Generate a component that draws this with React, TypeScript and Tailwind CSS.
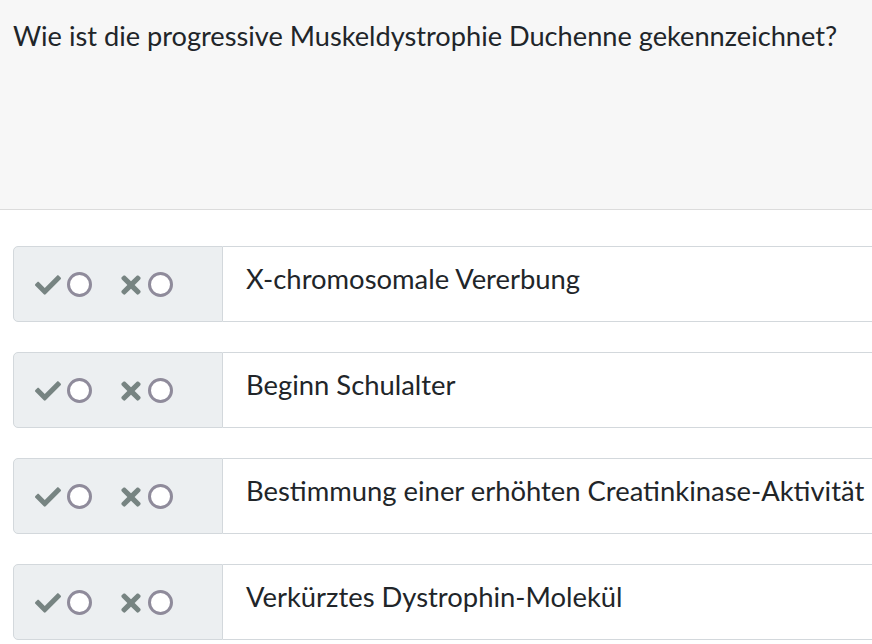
import { FaCheck, FaTimes } from 'react-icons/fa';

const answers = [
  'X-chromosomale Vererbung',
  'Beginn Schulalter',
  'Bestimmung einer erhöhten Creatinkinase-Aktivität',
  'Verkürztes Dystrophin-Molekül',
];

function Radio() {
  return <span className="inline-block w-[25px] h-[25px] rounded-full border-[3px] border-[#8f8b9b] bg-white" />;
}

function AnswerRow({ text }: { text: string }) {
  return (
    <div className="flex h-[76px] mr-[-40px]">
      <div className="flex items-center w-[210px] shrink-0 bg-[#eceff1] border border-[#d3d8dc] rounded-l-[5px] pl-[21px] pt-[1px]">
        <div className="flex items-center gap-[6px]">
          <FaCheck className="text-[#778482]" size={26} />
          <Radio />
        </div>
        <div className="flex items-center gap-[3px] ml-[25px]">
          <FaTimes className="text-[#778482]" size={28} />
          <Radio />
        </div>
      </div>
      <div className="flex-1 flex items-center bg-white border-y border-[#d3d8dc] pl-[23px] pb-[10px] whitespace-nowrap text-[27.4px] text-[#212529]">
        {text}
      </div>
    </div>
  );
}

export default function App() {
  return (
    <div className="w-[872px] h-[644px] overflow-hidden bg-white" style={{ fontFamily: 'Lato, "Noto Sans", sans-serif' }}>
      <div className="h-[210px] bg-[#f7f7f7] border-b border-[#dcdcdc] px-[13px] pt-[16px]">
        <h1 className="text-[27.2px] leading-[40px] text-[#212529] font-normal">
          Wie ist die progressive Muskeldystrophie Duchenne gekennzeichnet?
        </h1>
      </div>
      <div className="flex flex-col gap-[30px] pl-[13px] pt-[36px]">
        {answers.map((a) => (
          <AnswerRow key={a} text={a} />
        ))}
      </div>
    </div>
  );
}
